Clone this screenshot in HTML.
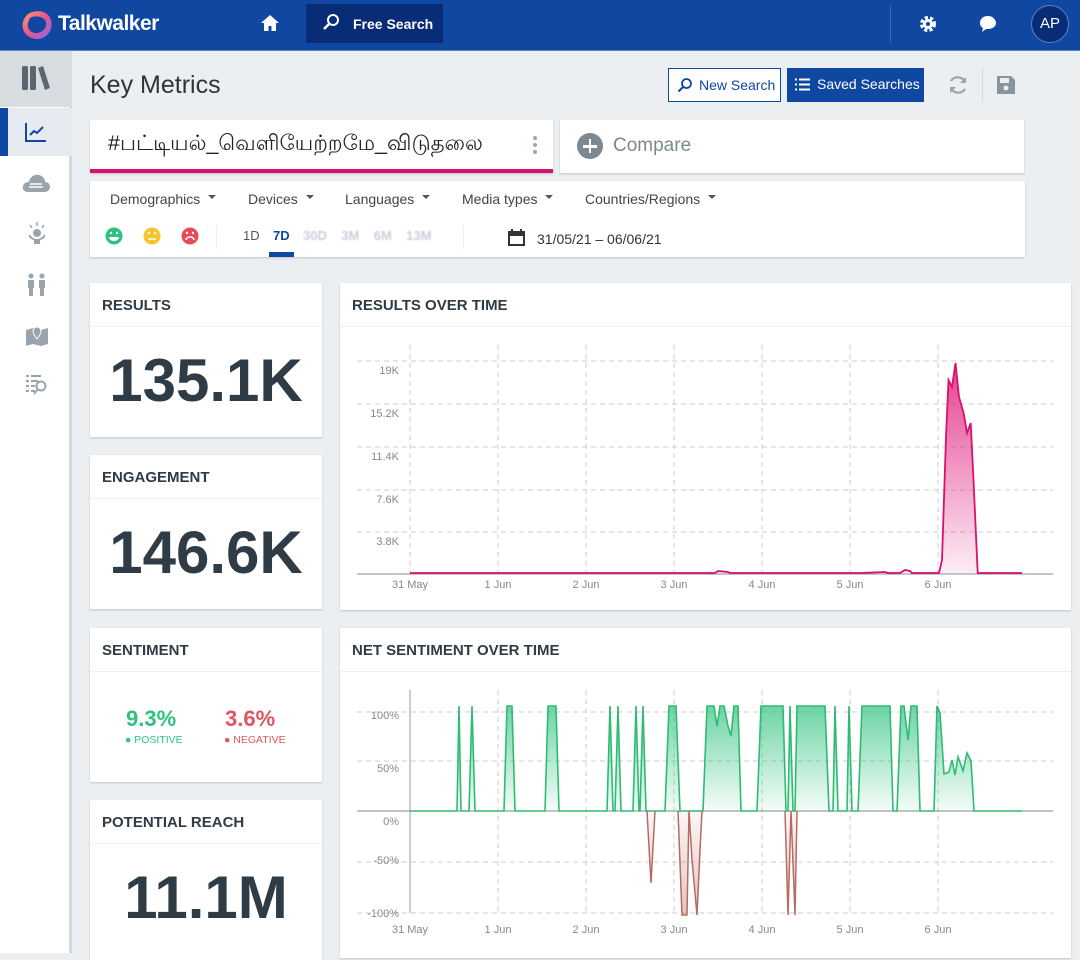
<!DOCTYPE html>
<html><head><meta charset="utf-8"><style>
*{box-sizing:border-box;margin:0;padding:0}
body{width:1080px;height:953px;overflow:hidden;background:#eceff2;font-family:"Liberation Sans","Noto Sans CJK SC",sans-serif;color:#333;position:relative}
.top{position:absolute;left:0;top:0;width:1080px;height:51px;background:#0f47a1;border-bottom:1px solid #5c84c4}
.side{position:absolute;left:0;top:51px;width:72px;height:902px;background:#fff;border-right:3px solid #d5d9de}
.card{position:absolute;background:#fff;box-shadow:0 1px 2px rgba(0,0,0,.18)}
.hd{height:44px;border-bottom:1px solid #eef0f2;padding:14px 12px;font-weight:bold;font-size:15px;color:#2f3b45}
.big{font-weight:bold;color:#2f3b45;font-size:60px;text-align:center}
.flt{position:absolute;top:191px;font-size:14px;color:#444}
.flt::after{content:"";display:inline-block;margin-left:8px;border:4px solid transparent;border-top:4px solid #555;vertical-align:1px}
.ax{font-size:11px;fill:#888;font-family:"Liberation Sans",sans-serif}
</style></head><body>
<div class="top">
 <svg style="position:absolute;left:20px;top:8px" width="34" height="34" viewBox="0 0 34 34"><defs><linearGradient id="lg" x1="0" y1="0" x2="1" y2="1"><stop offset="0" stop-color="#f9a25a"/><stop offset=".5" stop-color="#e9568f"/><stop offset="1" stop-color="#7a6cf0"/></linearGradient></defs><path d="M8 6C15 1 28 2 31 12C34 22 26 32 16 31C6 30 1 22 3 14C4 10 6 8 8 6Z" fill="url(#lg)"/><path d="M10 10C15 7 24 8 26 14C27 20 22 25 16 25C10 25 7 20 8 15Z" fill="#0f47a1"/></svg>
 <div style="position:absolute;left:58px;top:12px;color:#fff;font-size:21px;font-weight:bold;letter-spacing:-.5px">Talkwalker</div>
 <svg style="position:absolute;left:260px;top:14px" width="20" height="18" viewBox="0 0 20 18"><path d="M10 1L1 9h3v8h4.5v-5h3v5H16V9h3z" fill="#fff"/></svg>
 <div style="position:absolute;left:306px;top:4px;width:137px;height:39px;background:#082c75"></div>
 <svg style="position:absolute;left:322px;top:13px" width="18" height="18" viewBox="0 0 18 18"><circle cx="11" cy="7" r="5" fill="none" stroke="#fff" stroke-width="2"/><path d="M7.5 10.5L2 16" stroke="#fff" stroke-width="2.5"/></svg>
 <div style="position:absolute;left:353px;top:16px;color:#fff;font-size:14px;font-weight:bold">Free Search</div>
 <div style="position:absolute;left:890px;top:5px;width:1px;height:38px;background:#3d68b5"></div>
 <svg style="position:absolute;left:918px;top:14px" width="20" height="20" viewBox="0 0 20 20"><circle cx="10" cy="10" r="6" fill="none" stroke="#fff" stroke-width="4" stroke-dasharray="3 2"/><circle cx="10" cy="10" r="5" fill="#fff"/><circle cx="10" cy="10" r="2" fill="#0f47a1"/></svg>
 <svg style="position:absolute;left:978px;top:14px" width="20" height="20" viewBox="0 0 20 20"><path d="M10 2C5 2 2 5 2 9c0 2 1 4 3 5l-1 4 4-3c1 0 1 0 2 0 5 0 8-3 8-6s-3-7-8-7z" fill="#fff"/></svg>
 <div style="position:absolute;left:1031px;top:5px;width:38px;height:38px;border-radius:50%;background:#082c75;border:1px solid #5c84c4;color:#fff;font-size:15px;text-align:center;line-height:36px">AP</div>
</div>
<div class="side">
 <div style="position:absolute;left:0;top:0;width:72px;height:56px;background:#d8dde2"></div>
 <svg style="position:absolute;left:21px;top:13px" width="30" height="28" viewBox="0 0 30 28"><rect x="1" y="2" width="6" height="24" rx="1.5" fill="#5c6670"/><rect x="9" y="2" width="6" height="24" rx="1.5" fill="#5c6670"/><path d="M17 4l5-2 7 22-5 2z" fill="#5c6670"/></svg>
 <div style="position:absolute;left:0;top:57px;width:72px;height:48px;background:#e6ebf2"></div>
 <div style="position:absolute;left:0;top:57px;width:8px;height:48px;background:#0f47a1"></div>
 <svg style="position:absolute;left:25px;top:71px" width="22" height="20" viewBox="0 0 22 20"><path d="M1 1v18h20" fill="none" stroke="#0f47a1" stroke-width="2"/><path d="M5 13l4-4 3 2 6-6" fill="none" stroke="#0f47a1" stroke-width="2"/></svg>
 <svg style="position:absolute;left:22px;top:122px" width="28" height="20" viewBox="0 0 28 20"><path d="M6 19C2 19 0 16 1 13c1-3 3-4 6-4 1-5 5-8 10-7 4 1 6 4 6 7 3 0 5 2 5 5s-3 5-5 5z" fill="#9aa4ad"/><path d="M8 11h12M7 14h14" stroke="#fff" stroke-width="1.5"/></svg>
 <svg style="position:absolute;left:26px;top:170px" width="22" height="24" viewBox="0 0 22 24"><circle cx="11" cy="12" r="4" fill="#9aa4ad"/><path d="M3 13c2 2 4 5 8 5s6-3 8-5v3c-2 2-4 3-5 3v4H8v-4c-1 0-3-1-5-3z" fill="#9aa4ad"/><path d="M11 1v4M4 4l2 3M18 4l-2 3" stroke="#9aa4ad" stroke-width="1.5"/></svg>
 <svg style="position:absolute;left:26px;top:222px" width="22" height="24" viewBox="0 0 22 24"><circle cx="5" cy="3" r="2.5" fill="#9aa4ad"/><circle cx="16" cy="3" r="2.5" fill="#9aa4ad"/><path d="M2 7h6v8H7v8H3v-8H2zM13 7h6v8h-1v8h-4v-8h-1z" fill="#9aa4ad"/></svg>
 <svg style="position:absolute;left:25px;top:274px" width="24" height="22" viewBox="0 0 24 22"><path d="M1 5l7-2 8 2 7-2v16l-7 2-8-2-7 2z" fill="#9aa4ad"/><circle cx="12" cy="6" r="4" fill="#fff"/><path d="M12 2a4 4 0 0 1 4 4c0 3-4 8-4 8s-4-5-4-8a4 4 0 0 1 4-4z" fill="#9aa4ad" stroke="#fff"/></svg>
 <svg style="position:absolute;left:25px;top:323px" width="24" height="22" viewBox="0 0 24 22"><path d="M1 2h3M6 2h10M1 7h3M6 7h7M1 12h3M6 12h4M1 17h3M6 17h4" stroke="#9aa4ad" stroke-width="2"/><circle cx="16" cy="12" r="4.5" fill="none" stroke="#9aa4ad" stroke-width="2"/><path d="M13 15l-4 5" stroke="#9aa4ad" stroke-width="2"/></svg>
</div>

<div style="position:absolute;left:90px;top:71px;font-size:25px;color:#333">Key Metrics</div>
<div style="position:absolute;left:668px;top:68px;width:113px;height:34px;border:1px solid #0f47a1;background:#fff;color:#0f47a1;font-size:14px;padding:8px 0 0 30px">New Search</div>
<svg style="position:absolute;left:677px;top:77px" width="16" height="16" viewBox="0 0 16 16"><circle cx="9.5" cy="6.5" r="4.5" fill="none" stroke="#0f47a1" stroke-width="1.8"/><path d="M6 10l-4.5 4.5" stroke="#0f47a1" stroke-width="2"/></svg>
<div style="position:absolute;left:787px;top:68px;width:137px;height:34px;background:#0f47a1;color:#fff;font-size:14px;padding:8px 0 0 30px">Saved Searches</div>
<svg style="position:absolute;left:795px;top:78px" width="15" height="13" viewBox="0 0 15 13"><path d="M0 1.5h2M4 1.5h11M0 6.5h2M4 6.5h11M0 11.5h2M4 11.5h11" stroke="#fff" stroke-width="2"/></svg>
<svg style="position:absolute;left:947px;top:74px" width="22" height="22" viewBox="0 0 22 22"><path d="M18 8A8 8 0 0 0 4 7M4 14a8 8 0 0 0 14 1" fill="none" stroke="#9aa4ad" stroke-width="2.2"/><path d="M19 3v6h-6zM3 19v-6h6z" fill="#9aa4ad"/></svg>
<div style="position:absolute;left:982px;top:68px;width:1px;height:34px;background:#d4d8dc"></div>
<svg style="position:absolute;left:996px;top:75px" width="20" height="20" viewBox="0 0 20 20"><path d="M1 1h14l4 4v14H1z" fill="#8a949c"/><rect x="4" y="3" width="9" height="5" fill="#eceff2"/><circle cx="10" cy="13" r="2.5" fill="#eceff2"/></svg>

<div class="card" style="left:90px;top:120px;width:463px;height:53px;border-bottom:4px solid #d6116f">
 <div style="position:absolute;left:18px;top:11px;font-size:21.5px;color:#222;font-family:'Liberation Sans','Noto Sans CJK SC','DejaVu Sans',sans-serif">#பட்டியல்_வெளியேற்றமே_விடுதலை</div>
 <div style="position:absolute;left:443px;top:16px;width:4px;height:4px;border-radius:2px;background:#9aa;box-shadow:0 7px 0 #9aa,0 14px 0 #9aa"></div>
</div>
<div class="card" style="left:560px;top:120px;width:464px;height:53px">
 <div style="position:absolute;left:17px;top:13px;width:26px;height:26px;border-radius:50%;background:#7d8991"></div>
 <div style="position:absolute;left:23px;top:25px;width:14px;height:2.5px;background:#fff"></div><div style="position:absolute;left:28.8px;top:19px;width:2.5px;height:14px;background:#fff"></div>
 <div style="position:absolute;left:53px;top:15px;font-size:19px;color:#7d8991">Compare</div>
</div>
<div class="card" style="left:90px;top:181px;width:935px;height:76px"></div>
<div class="flt" style="left:110px">Demographics</div>
<div class="flt" style="left:248px">Devices</div>
<div class="flt" style="left:345px">Languages</div>
<div class="flt" style="left:462px">Media types</div>
<div class="flt" style="left:585px">Countries/Regions</div>
<svg style="position:absolute;left:105px;top:227px" width="100" height="18" viewBox="0 0 100 18"><circle cx="9" cy="9" r="8.5" fill="#2ec27e"/><circle cx="47" cy="9" r="8.5" fill="#f5c431"/><circle cx="85" cy="9" r="8.5" fill="#ea4a55"/><path d="M4 10h10a5 4 0 0 1-10 0z" fill="#fff"/><path d="M43 12h8" stroke="#fff" stroke-width="1.5"/><path d="M81 13a4 3 0 0 1 8 0" stroke="#fff" stroke-width="1.5" fill="none"/><circle cx="6" cy="6" r="1.2" fill="#fff"/><circle cx="12" cy="6" r="1.2" fill="#fff"/><circle cx="44" cy="6" r="1.2" fill="#fff"/><circle cx="50" cy="6" r="1.2" fill="#fff"/><circle cx="82" cy="6" r="1.2" fill="#fff"/><circle cx="88" cy="6" r="1.2" fill="#fff"/></svg>
<div style="position:absolute;left:216px;top:225px;width:1px;height:24px;background:#eee"></div>
<div style="position:absolute;left:243px;top:228px;font-size:13px;color:#555">1D</div>
<div style="position:absolute;left:273px;top:228px;font-size:13px;color:#0f47a1;font-weight:bold">7D</div>
<div style="position:absolute;left:269px;top:252px;width:25px;height:5px;background:#0f47a1"></div>
<div style="position:absolute;left:303px;top:228px;font-size:13px;color:#ccd;font-weight:bold;filter:blur(.8px)">30D&nbsp;&nbsp;&nbsp;&nbsp;3M&nbsp;&nbsp;&nbsp;&nbsp;6M&nbsp;&nbsp;&nbsp;&nbsp;13M</div>
<div style="position:absolute;left:463px;top:225px;width:1px;height:24px;background:#eee"></div>
<svg style="position:absolute;left:508px;top:229px" width="17" height="17" viewBox="0 0 17 17"><rect x="1" y="3" width="15" height="13" fill="none" stroke="#333" stroke-width="2"/><rect x="1" y="3" width="15" height="4" fill="#333"/><path d="M4 0v4M13 0v4" stroke="#333" stroke-width="2"/></svg>
<div style="position:absolute;left:537px;top:231px;font-size:14px;color:#333">31/05/21 – 06/06/21</div>

<div class="card" style="left:90px;top:283px;width:232px;height:154px"><div class="hd">RESULTS</div><div class="big" style="margin-top:19px">135.1K</div></div>
<div class="card" style="left:90px;top:455px;width:232px;height:154px"><div class="hd">ENGAGEMENT</div><div class="big" style="margin-top:19px">146.6K</div></div>
<div class="card" style="left:90px;top:628px;width:232px;height:154px"><div class="hd">SENTIMENT</div></div>
<div style="position:absolute;left:126px;top:706px;font-size:22px;font-weight:bold;color:#2ec27e">9.3%</div>
<div style="position:absolute;left:125px;top:734px;font-size:10.5px;color:#2ec27e">● POSITIVE</div>
<div style="position:absolute;left:225px;top:706px;font-size:22px;font-weight:bold;color:#e05560">3.6%</div>
<div style="position:absolute;left:224px;top:734px;font-size:10.5px;color:#e05560">● NEGATIVE</div>
<div class="card" style="left:90px;top:800px;width:232px;height:160px"><div class="hd">POTENTIAL REACH</div><div class="big" style="margin-top:19px">11.1M</div></div>

<div class="card" style="left:340px;top:283px;width:731px;height:327px"><div class="hd">RESULTS OVER TIME</div></div>
<div class="card" style="left:340px;top:628px;width:731px;height:330px"><div class="hd">NET SENTIMENT OVER TIME</div></div>

<svg style="position:absolute;left:0;top:0" width="1080" height="953">
<defs>
<linearGradient id="pk" x1="0" y1="0" x2="0" y2="1"><stop offset="0" stop-color="#e0207e" stop-opacity=".85"/><stop offset="1" stop-color="#e0207e" stop-opacity=".08"/></linearGradient>
<linearGradient id="gr" x1="0" y1="0" x2="0" y2="1"><stop offset="0" stop-color="#2ec27e" stop-opacity=".7"/><stop offset="1" stop-color="#2ec27e" stop-opacity=".05"/></linearGradient>
<linearGradient id="rd" x1="0" y1="0" x2="0" y2="1"><stop offset="0" stop-color="#b55a50" stop-opacity=".05"/><stop offset="1" stop-color="#b55a50" stop-opacity=".35"/></linearGradient>
</defs>
<g stroke="#ccc" stroke-dasharray="5 4" stroke-width="1">
<path d="M357 361H1053M357 404H1053M357 447H1053M357 490H1053M357 532H1053"/>
<path d="M410 345V574M498 345V574M586 345V574M674 345V574M762 345V574M850 345V574M938 345V574"/>
<path d="M357 712H1053M357 761H1053M357 862H1053M357 913H1053"/>
<path d="M498 690V913M586 690V913M674 690V913M762 690V913M850 690V913M938 690V913"/>
</g>
<path d="M357 574H1053M357 811H1053" stroke="#888"/>
<path d="M410 690V913" stroke="#999"/>
<g class="ax" text-anchor="end"><text x="399" y="374">19K</text><text x="399" y="417">15.2K</text><text x="399" y="460">11.4K</text><text x="399" y="503">7.6K</text><text x="399" y="545">3.8K</text>
<text x="399" y="719">100%</text><text x="399" y="772">50%</text><text x="399" y="825">0%</text><text x="399" y="864">-50%</text><text x="399" y="917">-100%</text></g>
<g class="ax" text-anchor="middle"><text x="410" y="588">31 May</text><text x="498" y="588">1 Jun</text><text x="586" y="588">2 Jun</text><text x="674" y="588">3 Jun</text><text x="762" y="588">4 Jun</text><text x="850" y="588">5 Jun</text><text x="938" y="588">6 Jun</text>
<text x="410" y="933">31 May</text><text x="498" y="933">1 Jun</text><text x="586" y="933">2 Jun</text><text x="674" y="933">3 Jun</text><text x="762" y="933">4 Jun</text><text x="850" y="933">5 Jun</text><text x="938" y="933">6 Jun</text></g>
<path d="M410 573L715 573L718 571L728 572L730 573L860 573L885 572L888 573L900 573L905 570L910 571L912 573L939 573L942 560L946 437L948.5 380L952 387L955.5 363L959 397L963.6 413L967 433L970.7 423L973.5 480L977.7 573H1022" fill="url(#pk)" stroke="#d6116f" stroke-width="1.8"/>
<path d="M410 811H457L459 706L461 811H469L472 706L475 811H504L507 706H512L515 811H545L548 706H556L559 811H607L610 706L613 811H615L618 706L621 811H633L636 706L639 811H640L643 706L646 811H665L669 706H676L680 811H703L707 706H714L717 726L720 706H724L728 726L731 736L734 706L738 706L741 811H757L761 706H783L786 811H788L790 706L793 811H795L797 706H825L829 811H833L835 706L838 811H847L849 706L852 811H858L862 706H890L893 811H897L901 706L904 706L908 740L911 706H917L920 811H934L937 706L940 713L944 774L949 772L952 760L955 775L958 757L961 765L963 771L967 753L971 761L974 811H1022" fill="url(#gr)" stroke="#2ebc72" stroke-width="1.6"/>
<path d="M647 811L651 883L655 811M678 811L682 915L687 915L689 811L692 860L697 915L700 850L702 811M785 811L788 915L791 811L795 915L797 811" fill="url(#rd)" stroke="#b86a62" stroke-width="1.5"/>
</svg>
</body></html>
